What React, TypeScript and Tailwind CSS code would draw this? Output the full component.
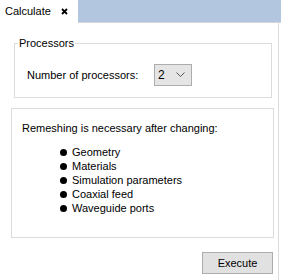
/**
 * Calculate panel - processors group, remeshing notice and execute button.
 */

const ITEMS = ['Geometry', 'Materials', 'Simulation parameters', 'Coaxial feed', 'Waveguide ports'];

function ProcessorSelect() {
  return (
    <div className="flex h-[22px] w-[38px] items-center justify-between border border-[#adadad] bg-[#e5e5e5] pl-[3px] pr-[6px] text-[12px]">
      <span>2</span>
      <svg width="9" height="6" viewBox="0 0 9 6" fill="none">
        <path d="M0.5 0.5 L4.5 4.5 L8.5 0.5" stroke="#555" strokeWidth="1" />
      </svg>
    </div>
  );
}

export default function App() {
  return (
    <div className="flex h-[280px] w-[281px] flex-col bg-white font-['Liberation_Sans',Arial,sans-serif] text-[11px] text-black">
      {/* Tab strip */}
      <div className="flex h-[23px] shrink-0">
        <div className="flex w-[78px] items-center gap-[10px] pl-[5px]">
          <span>Calculate</span>
          <svg width="7" height="7" viewBox="0 0 7 7">
            <path d="M1 1 L6 6 M6 1 L1 6" stroke="#000" strokeWidth="1.8" />
          </svg>
        </div>
        <div className="flex-1 border-b border-[#d6d6d6] bg-[#b2c6df]" />
      </div>

      <div className="mr-[2px] flex flex-1 flex-col border-r border-[#dcdcdc]">
        {/* Processors group */}
        <fieldset className="ml-[14px] mt-[14px] h-[61px] w-[258px] border border-[#dcdcdc] pl-[12px]">
          <legend className="-ml-[9px] px-[1px] leading-[13px]">Processors</legend>
          <div className="mt-[14px] flex items-center">
            <span className="w-[127px]">Number of processors:</span>
            <ProcessorSelect />
          </div>
        </fieldset>

        {/* Remeshing notice */}
        <div className="ml-[11px] mt-[10px] h-[130px] w-[263px] border border-[#dcdcdc] pl-[10px] pt-[12px]">
          <div className="leading-[15px]">Remeshing is necessary after changing:</div>
          <ul className="mt-[9px] pl-[38px]">
            {ITEMS.map((item) => (
              <li key={item} className="flex h-[14px] items-center gap-[5px]">
                <span className="h-[7px] w-[7px] rounded-full bg-black" />
                <span>{item}</span>
              </li>
            ))}
          </ul>
        </div>

        <div className="mt-[14px] flex justify-end pr-[5px]">
          <button
            type="button"
            className="h-[22px] w-[71px] border border-[#adadad] bg-[#e1e1e1]"
          >
            Execute
          </button>
        </div>
      </div>
    </div>
  );
}
